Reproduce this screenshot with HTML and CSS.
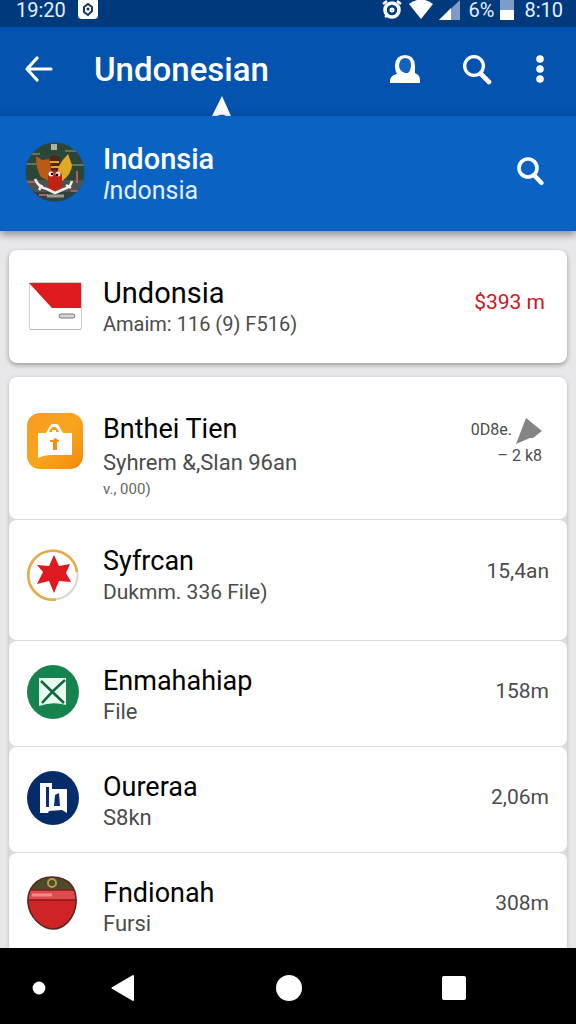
FILE: index.html
```html
<!DOCTYPE html>
<html lang="id">
<head>
<meta charset="utf-8">
<meta name="viewport" content="width=device-width, initial-scale=1">
<title>Undonesian</title>
<link rel="stylesheet" href="styles.css">
</head>
<body>
<div class="status">
  <span>19:20</span>
  <svg class="status-app" width="20" height="20" viewBox="0 0 20 20"><rect y="-2" width="20" height="21" rx="4" fill="#fff"/><path d="M6 7l4-3 4 3v4l-4 4-4-3z" fill="none" stroke="#17345f" stroke-width="2"/><circle cx="10" cy="9" r="1.500" fill="#17345f"/></svg>
  <span class="spacer"></span>
  <svg width="22" height="20" viewBox="0 0 22 20" fill="none" stroke="#fff"><circle cx="11" cy="10" r="7" stroke-width="3.600"/><path d="M2 4l4-3M16 1l4 3M4 17l3-2" stroke-width="2.400"/><circle cx="11" cy="10" r="1.500" stroke-width="2"/></svg>
  <svg width="24" height="20" viewBox="0 0 24 20"><path d="M0 4Q12-5 24 4L12 19z" fill="#fff"/></svg>
  <svg width="22" height="20" viewBox="0 0 22 20"><path d="M21 0v20H0z" fill="#7e9cc5"/><path d="M12 8v12H0z" fill="#fff"/></svg>
  <span class="percent">6%</span>
  <svg class="battery" width="14" height="20" viewBox="0 0 14 20"><path d="M0 0h14v10H0z" fill="#7e9cc5"/><path d="M0 10h14v10H0z" fill="#fff"/></svg>
  <span>8:10</span>
</div>
<header class="appbar">
  <button class="icon-btn" aria-label="Back"><svg width="28" height="28" viewBox="0 0 28 28" fill="none" stroke="#fff" stroke-width="3.200" stroke-linecap="round" stroke-linejoin="round"><path d="M12 2L2 13l10 11M2 13h24"/></svg></button>
  <h1 class="title">Undonesian</h1>
  <div class="actions">
    <button class="icon-btn" aria-label="Account"><svg width="30" height="30" viewBox="0 0 30 30"><path d="M0 28v-3q1-5 7-6Q5 16 5 10 6 0 15 0t10 10v8q5 2 5 7v3z" fill="#fff"/><path d="M15 3q6 0 6 7 0 5-3 8h-3Q9 16 9 10q1-7 6-7z" fill="#1263be"/></svg></button>
    <button class="icon-btn" aria-label="Search"><svg width="30" height="30" viewBox="0 0 30 30" fill="none" stroke="#fff"><circle cx="11" cy="11" r="9.400" stroke-width="3.400"/><path d="M17.500 18.500L26 27" stroke-width="4.600" stroke-linecap="round"/></svg></button>
    <button class="icon-btn" aria-label="More options"><svg width="8" height="30" viewBox="0 0 8 30" fill="#fff"><circle cx="4" cy="4" r="3.800"/><circle cx="4" cy="14" r="3.800"/><circle cx="4" cy="24" r="3.800"/></svg></button>
  </div>
  <svg class="pointer" width="20" height="20" viewBox="0 0 20 20"><path d="M10 0l9 20h-5q-3-2-6-1l-3 1H0z" fill="#fff"/></svg>
</header>
<section class="profile">
  <svg class="avatar" width="60" height="60" viewBox="0 0 60 60">
    <defs><clipPath id="round"><circle cx="30" cy="30" r="29.500"/></clipPath></defs>
    <g clip-path="url(#round)">
      <path d="M0 0h60v60H0z" fill="#2c4738"/>
      <path d="M0 38h60v14H0z" fill="#4d5350"/><path d="M0 50h60v10H0z" fill="#2f4140"/>
      <path d="M2 22h12M44 23h16M5 12h10M40 9h12" stroke="#66745c" stroke-width="2"/>
      <path d="M0 40h12M46 49h14M14 53h9M52 29v12" stroke="#a9605e" stroke-width="2"/>
      <path d="M26 2h6v6h-6z" fill="#a9b4a2"/>
      <path d="M11 14l6 4 7-1 5 12-2 12-11-6q-5-7-5-21z" fill="#b95a17"/>
      <path d="M43 12l4 11q0 9-11 17l-4-12 5-9z" fill="#e0a928"/>
      <path d="M25 15q5-4 10 1l-2 13h-7z" fill="#562415"/><path d="M25 20h9M26 25h8" stroke="#e6a42b" stroke-width="2"/>
      <path d="M23 32q7-7 14 0v13l-7 6-7-6z" fill="#bd2418"/>
      <circle cx="26" cy="32" r="2.500" fill="#fff"/><circle cx="33" cy="32" r="2.500" fill="#f4ddd4"/><circle cx="27" cy="32" r="1.300"/><circle cx="32" cy="33" r="1.300"/>
      <path d="M10 37q4 9 12 10l8 4 9-4q6-1 8-8M17 43l-3 5M41 43l5 3" fill="none" stroke="#f2eee9" stroke-width="2.600"/>
      <path d="M22 54h17" stroke="#9e9c8d" stroke-width="3"/>
    </g>
  </svg>
  <div class="profile-text"><h2 class="profile-name">Indonsia</h2><p class="profile-sub"><i>I</i>ndonsia</p></div>
  <button class="icon-btn" aria-label="Search Indonsia"><svg width="28" height="30" viewBox="0 0 28 30" fill="none" stroke="#fff"><circle cx="11" cy="11" r="9" stroke-width="3.600"/><path d="M17 18l7.500 8" stroke-width="4.400" stroke-linecap="round"/></svg></button>
</section>
<main class="list">
  <article class="row featured">
    <svg class="icon" viewBox="0 0 56 56"><rect x="2.500" y="4.500" width="52" height="47" rx="2" fill="#fff" stroke="#cfcfd1"/><path d="M2 5h52v25H25z" fill="#df1b1f"/><rect x="32" y="36" width="16" height="4" rx="2" fill="#d5d5d8" stroke="#77777b"/><path d="M3 51.500h51" stroke="#b5b5b8"/></svg>
    <div class="text"><h3 class="name">Undonsia</h3><p class="sub">Amaim: 116 (9) F516)</p></div>
    <p class="amount">$393 m</p>
  </article>
  <div class="group">
    <article class="row tall">
      <svg class="icon" viewBox="0 0 56 56"><defs><linearGradient id="amber" x2="1" y2="1"><stop stop-color="#f79a20"/><stop offset=".5" stop-color="#f9a51f"/><stop offset="1" stop-color="#f38a08"/></linearGradient></defs><rect width="56" height="56" rx="13" fill="url(#amber)"/><path d="M11 20h8l4-7q1-2 3-2h3q2 0 3 2l4 7h9v22H24q-7 0-13 3z" fill="#fff"/><path d="M22 19q2-5 5-5t5 5z" fill="#f69a18"/><path d="M25 17h4v2h-4z" fill="#fff"/><path d="M28 25l5 3-3 1v8h-4v-8h-3v-2h3z" fill="#f18e1b"/></svg>
      <div class="text"><h3 class="name">Bnthei Tien</h3><p class="sub">Syhrem &amp;,Slan 96an</p><p class="note">v., 000)</p></div>
      <div class="meta"><p class="meta-line">0D8e. <svg width="26" height="26" viewBox="0 0 26 26"><path d="M10 0l16 13-9 7h-3L0 26z" fill="#858585"/></svg></p><p class="meta-line">– 2 k8</p></div>
    </article>
    <article class="row medium">
      <svg class="icon" viewBox="0 0 56 56"><circle cx="26" cy="30" r="24.500" fill="#fff" stroke="#d5d5d5" stroke-width="2"/><path d="M50 27A24.500 24.500 0 1 0 29 54.500" fill="none" stroke="#e4ad48" stroke-width="2.600"/><path d="M27 10l5 11 11-2-4 9 5 9-12-1-5 12-5-12-12 3 6-12-6-7 12 1z" fill="#df1920"/></svg>
      <div class="text"><h3 class="name">Syfrcan</h3><p class="sub">Dukmm. 336 File)</p></div>
      <p class="amount">15,4an</p>
    </article>
    <article class="row">
      <svg class="icon" viewBox="0 0 56 56"><ellipse cx="26" cy="29" rx="26" ry="27" fill="#16834f"/><path d="M12 15h27v27q-13-4-27 1z" fill="#e9faf1"/><path d="M14 18l23 22M38 17Q25 28 15 40" fill="none" stroke="#12663e" stroke-width="2.600"/></svg>
      <div class="text"><h3 class="name">Enmahahiap</h3><p class="sub">File</p></div>
      <p class="amount">158m</p>
    </article>
    <article class="row">
      <svg class="icon" viewBox="0 0 56 56"><ellipse cx="26" cy="29" rx="26" ry="27" fill="#042c69"/><path d="M13 14h12v6h15v24l-5-3-13 1-1 2h-8z" fill="#fff"/><path d="M19 18h3v20h-3zM28 26l4-2 1 13h-6z" fill="#08306c"/></svg>
      <div class="text"><h3 class="name">Oureraa</h3><p class="sub">S8kn</p></div>
      <p class="amount">2,06m</p>
    </article>
    <article class="row">
      <svg class="icon" viewBox="0 0 56 56"><defs><clipPath id="shield"><path d="M25 2C42 2 50 13 49 28S37 54 26 54 2 42 1 28 9 2 25 2z"/></clipPath></defs><g clip-path="url(#shield)"><path d="M0 0h52v56H0z" fill="#ce2425"/><path d="M0 0h52v15H0z" fill="#4c4c2d"/><path d="M0 15h52v10H0z" fill="#df4b4d"/><path d="M5 20h20" stroke="#ef8c89" stroke-width="3"/><path d="M0 25h52M0 15h52" stroke="#8a171a" stroke-width="1.500"/><circle cx="25" cy="8" r="4" fill="none" stroke="#bd9a43" stroke-width="2"/></g><path d="M25 2C42 2 50 13 49 28S37 54 26 54 2 42 1 28 9 2 25 2z" fill="none" stroke="#5b2520" stroke-width="1.600"/></svg>
      <div class="text"><h3 class="name">Fndionah</h3><p class="sub">Fursi</p></div>
      <p class="amount">308m</p>
    </article>
  </div>
</main>
<nav class="nav" aria-label="System">
  <button class="icon-btn" aria-label="Status"><svg width="14" height="14" viewBox="0 0 14 14"><circle cx="7" cy="7" r="6.400" fill="#fff"/></svg></button>
  <button class="icon-btn" aria-label="Go back"><svg width="24" height="28" viewBox="0 0 24 28"><path d="M1.500 14L22 2v24z" fill="#fff" stroke="#fff" stroke-width="2" stroke-linejoin="round"/></svg></button>
  <button class="icon-btn" aria-label="Home"><svg width="28" height="28" viewBox="0 0 28 28"><circle cx="14" cy="14" r="13" fill="#fff"/></svg></button>
  <button class="icon-btn" aria-label="Recent apps"><svg width="24" height="24" viewBox="0 0 24 24"><rect width="24" height="24" rx="2" fill="#fff"/></svg></button>
</nav>
</body>
</html>
```
FILE: styles.css
```css
* { box-sizing: border-box; }
body {
  margin: 0;
  height: 100vh;
  display: flex;
  flex-direction: column;
  font-family: Roboto, "Liberation Sans", sans-serif;
  background: #e8e8ea;
  color: #000;
}
h1, h2, h3, p { margin: 0; font-weight: 400; }
svg { display: block; flex: none; }
.icon-btn {
  display: flex;
  align-items: center;
  justify-content: center;
  padding: 0;
  border: 0;
  background: none;
}
.status {
  flex: none;
  display: flex;
  align-items: center;
  gap: 6px;
  padding: 0 13px 7px 16px;
  font-size: 20px;
  line-height: 20px;
  color: #e4f1ff;
  background: #003a7d;
}
.status-app { margin-left: 6px; }
.spacer { flex: 1; }
.percent { margin-left: 2px; }
.battery { margin-right: 4px; }
.appbar {
  position: relative;
  flex: none;
  display: flex;
  align-items: center;
  gap: 41px;
  padding: 24px 32px 28px 25px;
  color: #fff;
  background: #0353af;
}
.actions { display: flex; gap: 43px; }
.title {
  flex: 1;
  font-size: 33px;
  line-height: 37px;
  font-weight: 500;
}
.pointer { position: absolute; left: 212px; bottom: 0; }
.profile {
  position: relative;
  flex: none;
  display: flex;
  align-items: center;
  gap: 18px;
  padding: 21px 31px 24px 25px;
  color: #fff;
  background: #0a63c3;
  box-shadow: 0 3px 9px rgba(0, 0, 0, .45);
}
.profile-text { flex: 1; padding-top: 6px; }
.profile-name { font-size: 29px; line-height: 32px; font-weight: 500; }
.profile-sub { font-size: 25px; line-height: 32px; color: #e0f0ff; }
.list {
  flex: 1;
  min-height: 0;
  overflow-y: auto;
  scrollbar-width: none;
  padding: 19px 9px 0;
}
.row {
  display: flex;
  align-items: flex-start;
  gap: 20px;
  padding: 22px 18px 19px;
  border-radius: 8px;
  background: #fff;
}
.icon { width: 56px; height: 56px; }
.text { flex: 1; min-width: 0; padding-top: 2px; }
.name { font-size: 27px; line-height: 32px; }
.sub { font-size: 22px; line-height: 30px; color: #4c4c4c; }
.amount { font-size: 21px; line-height: 56px; color: #4c4c4c; }
.featured {
  align-items: center;
  padding: 23px 22px 24px 18px;
  margin-bottom: 14px;
  box-shadow: 0 2px 5px rgba(0, 0, 0, .35);
}
.featured .text { padding-top: 4px; }
.featured .name { font-size: 29px; }
.featured .sub { font-size: 20px; }
.featured .amount { padding-bottom: 8px; color: #cf1420; }
.group {
  display: flex;
  flex-direction: column;
  gap: 1px;
  border-radius: 8px;
  background: #dcdcde;
  box-shadow: 0 1px 4px rgba(0, 0, 0, .2);
}
.tall { padding: 36px 25px 20px 18px; }
.tall .text { padding-top: 0; }
.tall .sub { padding-top: 2px; line-height: 32px; }
.note { font-size: 15px; line-height: 20px; color: #666; }
.medium { padding: 25px 18px 33px; }
.medium .text { padding-top: 0; }
.medium .sub { font-size: 21px; }
.medium .amount { line-height: 52px; }
.meta { display: flex; flex-direction: column; align-items: flex-end; padding-top: 5px; color: #4c4c4c; }
.meta-line { display: flex; gap: 4px; font-size: 16px; line-height: 24px; }
.nav {
  flex: none;
  display: grid;
  grid-template-columns: 78fr 90fr 242fr 88fr 78fr;
  padding: 26px 0 22px;
  background: #000;
  position: relative;
}
.nav .icon-btn { min-height: 28px; }
```
